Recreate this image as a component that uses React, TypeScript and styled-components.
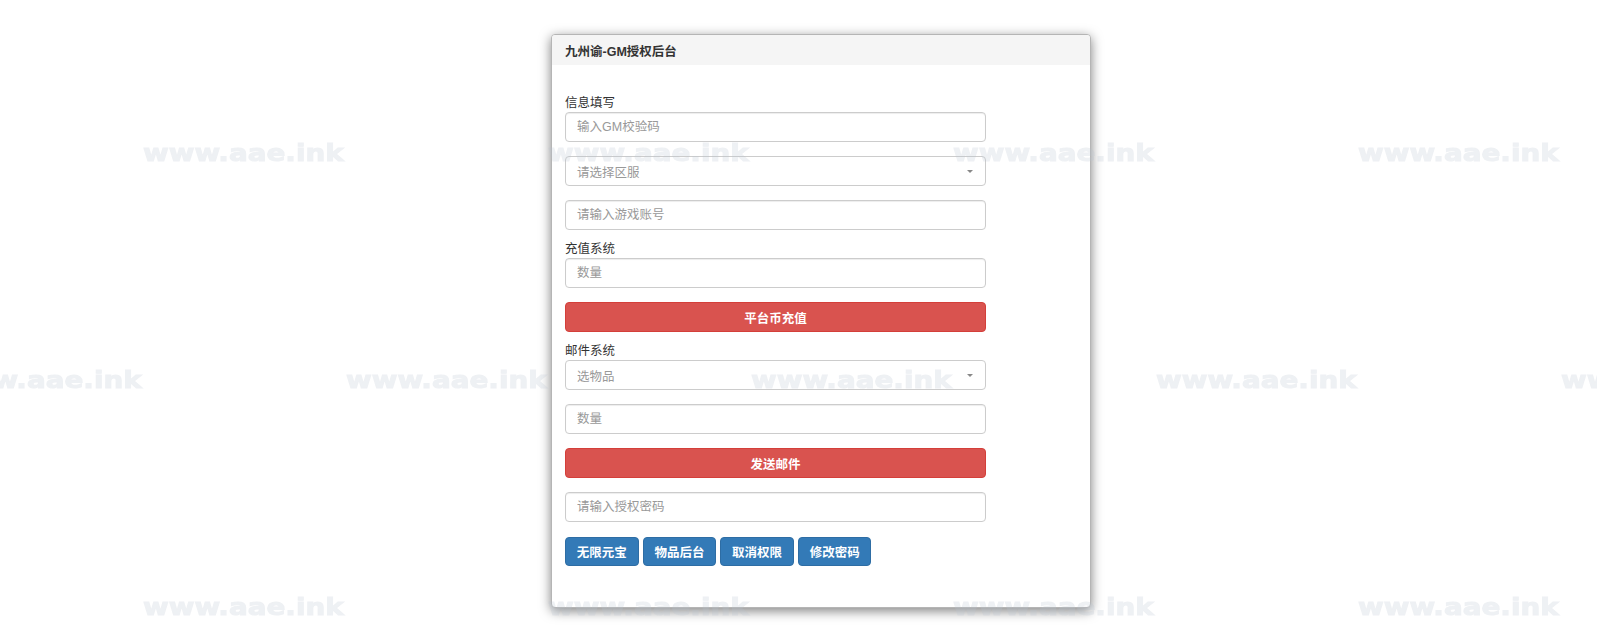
import styled, { createGlobalStyle } from 'styled-components';

const GlobalStyle = createGlobalStyle`
  html, body {
    margin: 0;
    padding: 0;
    background: #fff;
  }
  body {
    font-family: "Liberation Sans", "Noto Sans CJK SC", sans-serif;
    font-size: 12.5px;
    color: #333;
  }
`;

const Page = styled.div`
  display: flex;
  justify-content: center;
  padding: 34px 0 0 45px;
  min-height: 634px;
  box-sizing: border-box;
`;

const Panel = styled.div`
  width: 540px;
  box-sizing: border-box;
  background: #fff;
  border: 1px solid #b5b5b5;
  border-radius: 4px;
  box-shadow: 0 3px 12px rgba(0, 0, 0, 0.5);
  align-self: flex-start;
`;

const Heading = styled.div`
  height: 30px;
  display: flex;
  align-items: center;
  padding: 0 13px;
  background: #f5f5f5;
  border-radius: 3px 3px 0 0;
  font-weight: bold;
  font-size: 12.5px;
  color: #333;
`;

const Body = styled.div`
  padding: 30px 13px 41px;
`;

const Form = styled.form`
  width: 421px;
  display: flex;
  flex-direction: column;
  gap: 11px;
`;

const Section = styled.div`
  display: flex;
  flex-direction: column;
  gap: 14px;
`;

const Group = styled.div`
  display: flex;
  flex-direction: column;
`;

const Label = styled.label`
  line-height: 17px;
  font-size: 12.5px;
  color: #333;
`;

const Input = styled.input`
  height: 30px;
  box-sizing: border-box;
  border: 1px solid #ccc;
  border-radius: 4px;
  padding: 0 11px;
  font-family: inherit;
  font-size: 12.5px;
  color: #555;
  background: #fff;
  box-shadow: inset 0 1px 1px rgba(0, 0, 0, 0.075);
  outline: none;

  &::placeholder {
    color: #999;
  }
`;

const SelectBox = styled.div`
  position: relative;
  height: 30px;
  box-sizing: border-box;
  border: 1px solid #ccc;
  border-radius: 4px;
  padding: 0 11px;
  display: flex;
  align-items: center;
  color: #999;
  background: #fff;

  &::after {
    content: '';
    position: absolute;
    right: 12px;
    top: 13px;
    border-style: solid;
    border-width: 3px 3px 0 3px;
    border-color: #888 transparent transparent transparent;
  }
`;

const Button = styled.button<{ $variant: 'danger' | 'primary'; $block?: boolean }>`
  height: ${(p) => (p.$block ? '30px' : '29px')};
  width: ${(p) => (p.$block ? '100%' : 'auto')};
  padding: 0 10.8px;
  box-sizing: border-box;
  border-radius: 4px;
  font-family: inherit;
  font-size: 12.5px;
  font-weight: bold;
  color: #fff;
  cursor: pointer;
  background: ${(p) => (p.$variant === 'danger' ? '#d9534f' : '#337ab7')};
  border: 1px solid ${(p) => (p.$variant === 'danger' ? '#d43f3a' : '#2e6da4')};
`;

const ButtonRow = styled.div`
  display: flex;
  gap: 4px;
  margin-top: 4px;
`;

const Watermarks = styled.div`
  position: fixed;
  inset: 0;
  pointer-events: none;
  overflow: hidden;
  z-index: 10;
  display: flex;
  flex-direction: column;
  gap: 204px;
  padding-top: 142px;
`;

const MarkRow = styled.div<{ $offset: number }>`
  display: flex;
  margin-left: ${(p) => p.$offset}px;
`;

const Mark = styled.span`
  flex: 0 0 405px;
  height: 23px;
  line-height: 23px;
  font-family: "DejaVu Sans", "Liberation Sans", sans-serif;
  font-weight: bold;
  font-size: 23px;
  color: #b9c3d0;
  -webkit-text-stroke: 1px #b9c3d0;
  opacity: 0.24;
  white-space: nowrap;
  transform: scaleX(1.21);
  transform-origin: left center;
`;

const rows = [143, -59, 143];

export default function App() {
  return (
    <>
      <GlobalStyle />
      <Page>
        <Panel>
          <Heading>九州谕-GM授权后台</Heading>
          <Body>
            <Form onSubmit={(e) => e.preventDefault()}>
              <Section>
                <Group>
                  <Label>信息填写</Label>
                  <Input placeholder="输入GM校验码" />
                </Group>
                <SelectBox>请选择区服</SelectBox>
                <Input placeholder="请输入游戏账号" />
              </Section>
              <Section>
                <Group>
                  <Label>充值系统</Label>
                  <Input placeholder="数量" />
                </Group>
                <Button type="button" $variant="danger" $block>平台币充值</Button>
              </Section>
              <Section>
                <Group>
                  <Label>邮件系统</Label>
                  <SelectBox>选物品</SelectBox>
                </Group>
                <Input placeholder="数量" />
                <Button type="button" $variant="danger" $block>发送邮件</Button>
                <Input placeholder="请输入授权密码" />
              </Section>
              <ButtonRow>
                <Button type="button" $variant="primary">无限元宝</Button>
                <Button type="button" $variant="primary">物品后台</Button>
                <Button type="button" $variant="primary">取消权限</Button>
                <Button type="button" $variant="primary">修改密码</Button>
              </ButtonRow>
            </Form>
          </Body>
        </Panel>
      </Page>
      <Watermarks>
        {rows.map((offset, r) => (
          <MarkRow key={r} $offset={offset}>
            {Array.from({ length: 5 }).map((_, i) => (
              <Mark key={i}>www.aae.ink</Mark>
            ))}
          </MarkRow>
        ))}
      </Watermarks>
    </>
  );
}
